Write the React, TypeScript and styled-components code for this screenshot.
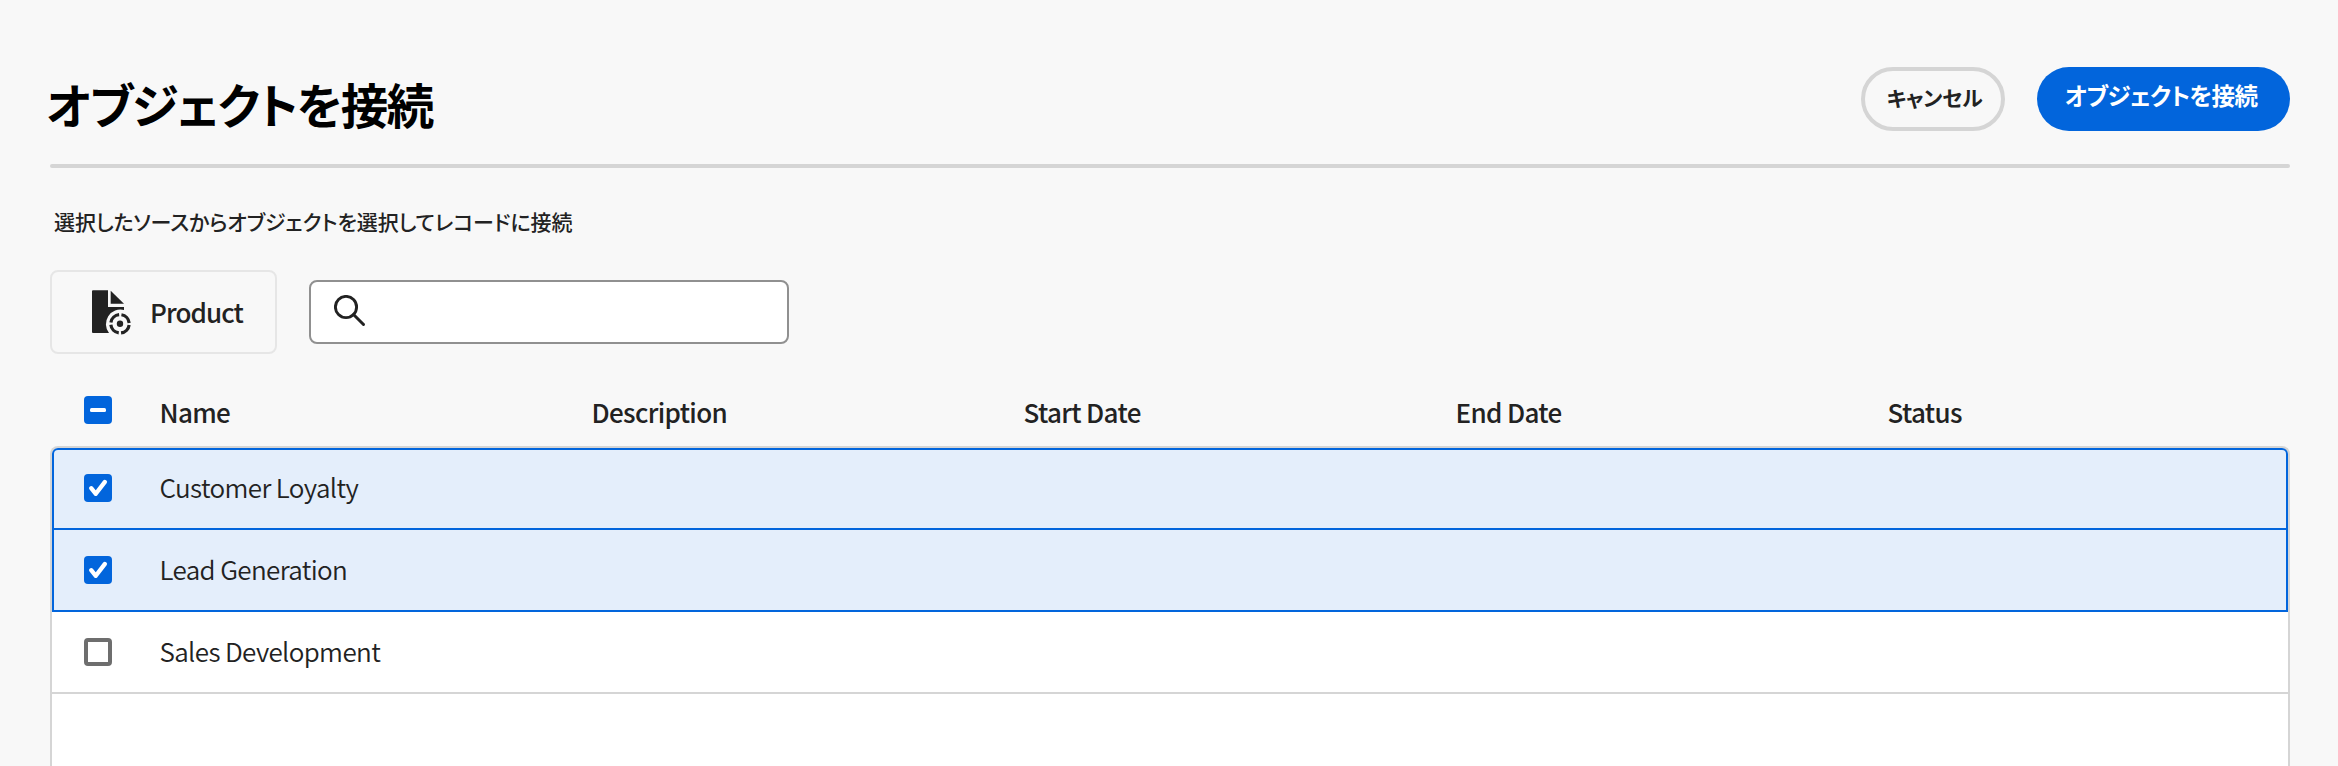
import React from "react";
import styled, { createGlobalStyle } from "styled-components";

const GlobalStyle = createGlobalStyle`
  * { box-sizing: border-box; }
  html, body { margin: 0; height: 100%; background: #f8f8f8; overflow: hidden; }
  body {
    font-family: "Noto Sans CJK JP", "Noto Sans", sans-serif;
    color: #222222;
  }
  #root { height: 100%; }
`;

const Page = styled.main`
  height: 766px;
  padding: 67px 48px 0 50px;
  display: flex;
  flex-direction: column;
  overflow: hidden;
`;

const Header = styled.header`
  display: flex;
  justify-content: space-between;
  height: 101px;
`;

const Title = styled.h1`
  margin: 4px 0 0 -4px;
  font-size: 47.5px;
  line-height: 66px;
  font-weight: 700;
  letter-spacing: -1.5px;
  font-feature-settings: "palt";
  color: #000000;
  white-space: nowrap;
`;

const Actions = styled.div`
  display: flex;
  gap: 32px;
`;

const Button = styled.button<{ $primary?: boolean }>`
  width: ${(p) => (p.$primary ? "253px" : "144px")};
  height: 64px;
  border-radius: 32px;
  border: ${(p) => (p.$primary ? "0" : "4px solid #d5d5d5")};
  background: ${(p) => (p.$primary ? "#0265dc" : "transparent")};
  color: ${(p) => (p.$primary ? "#ffffff" : "#222222")};
  padding: ${(p) => (p.$primary ? "0 5px 8px 0" : "0 0 4px 3px")};
  font-family: inherit;
  font-size: ${(p) => (p.$primary ? "23.5px" : "21px")};
  line-height: 32px;
  font-weight: 700;
  letter-spacing: ${(p) => (p.$primary ? "-0.6px" : "-0.2px")};
  font-feature-settings: "palt";
  white-space: nowrap;
`;

const Divider = styled.hr`
  width: 100%;
  margin: -4px 0 0;
  border: 0;
  height: 4px;
  flex: none;
  border-radius: 2px;
  background: #d5d5d5;
`;

const Hint = styled.p`
  margin: 37px 0 0 4px;
  height: 33px;
  font-size: 21px;
  line-height: 32px;
  font-weight: 500;
  letter-spacing: -0.08px;
  font-feature-settings: "palt";
  white-space: nowrap;
`;

const Toolbar = styled.div`
  display: flex;
  align-items: center;
  gap: 32px;
  height: 84px;
  margin-top: 32px;
`;

const SourceCard = styled.div`
  display: flex;
  align-items: center;
  width: 227px;
  height: 84px;
  padding-left: 40px;
  border: 2px solid #e6e6e6;
  border-radius: 8px;

  svg { margin-top: 2px; }
`;

const SourceName = styled.span`
  margin: -1px 0 0 18px;
  font-size: 26px;
  line-height: 36px;
  font-weight: 500;
  letter-spacing: -0.9px;
`;

const SearchBox = styled.label`
  display: flex;
  width: 480px;
  height: 64px;
  padding: 13px 16px 0 23px;
  border: 2px solid #909090;
  border-radius: 8px;
  background: #ffffff;
`;

const SearchInput = styled.input`
  flex: 1;
  height: 34px;
  border: 0;
  outline: 0;
  background: transparent;
  font: inherit;
  font-size: 26px;
`;

const HeadRow = styled.div`
  display: grid;
  grid-template-columns: 76px 432px 432px 432px 432px 1fr;
  height: 92px;
  padding: 42px 0 0 34px;
`;

const HeadCell = styled.div`
  font-size: 26px;
  line-height: 36px;
  margin: -2px 0 0 -0.5px;
  font-weight: 500;
  letter-spacing: -0.65px;
`;

const TableBody = styled.div`
  flex: 1;
  border: 2px solid #d5d5d5;
  border-bottom: 0;
  border-radius: 8px 8px 0 0;
  background: #ffffff;
`;

const Row = styled.div<{ $selected?: boolean; $first?: boolean }>`
  display: grid;
  grid-template-columns: 76px 1fr;
  height: 82px;
  padding: ${(p) => (p.$first ? "24px" : "26px")} 0 0 ${(p) => (p.$selected ? "30px" : "32px")};
  border-style: solid;
  border-color: ${(p) => (p.$selected ? "#0265dc" : "#d5d5d5")};
  border-width: ${(p) => (p.$first ? "2px" : "0")} ${(p) => (p.$selected ? "2px" : "0")} 2px;
  border-radius: ${(p) => (p.$first ? "6px 6px 0 0" : "0")};
  background: ${(p) => (p.$selected ? "#e4eefb" : "#ffffff")};
`;

const Cell = styled.div`
  font-size: 26px;
  line-height: 36px;
  margin: -5px 0 0 -0.5px;
  font-weight: 350;
  letter-spacing: -0.63px;
`;

const Box = styled.span<{ $on: boolean }>`
  display: flex;
  width: 28px;
  height: 28px;
  border-radius: 4px;
  border: ${(p) => (p.$on ? "0" : "4px solid #6e6e6e")};
  background: ${(p) => (p.$on ? "#0265dc" : "#ffffff")};
`;

type CheckState = "mixed" | "on" | "off";

function Checkbox({ state }: { state: CheckState }) {
  return (
    <Box $on={state !== "off"} role="checkbox" aria-checked={state === "mixed" ? "mixed" : state === "on"}>
      {state === "mixed" && (
        <svg width="28" height="28" viewBox="0 0 28 28">
          <rect x="6" y="12" width="16" height="4" rx="1.5" fill="#fff" />
        </svg>
      )}
      {state === "on" && (
        <svg width="28" height="28" viewBox="0 0 28 28">
          <path d="M7.200 14.200L11.800 19.800L20.900 7.900" fill="none" stroke="#fff" strokeWidth="4.300" strokeLinecap="round" strokeLinejoin="round" />
        </svg>
      )}
    </Box>
  );
}

function FileTargetIcon() {
  return (
    <svg width="40" height="46" viewBox="0 0 40 46">
      <path d="M1 .3H16V17H32V20A14.500 14.500 0 0 0 17 43H1A1 1 0 0 1 0 42V1.300A1 1 0 0 1 1 .3Z" fill="#222" />
      <path d="M18.700 .8V13.700H32Z" fill="#222" />
      <circle cx="28" cy="33.800" r="9.200" fill="none" stroke="#222" strokeWidth="3.200" strokeDasharray="12.051 2.400" strokeDashoffset="-1.200" />
      <circle cx="28" cy="33.800" r="3.200" fill="#222" />
    </svg>
  );
}

function SearchIcon() {
  return (
    <svg width="32" height="32" viewBox="0 0 32 32">
      <circle cx="12" cy="12" r="10.600" fill="none" stroke="#222" strokeWidth="2.900" />
      <path d="M19.500 19.500L29.500 29.500" stroke="#222" strokeWidth="3" strokeLinecap="round" />
    </svg>
  );
}

const headings = ["Name", "Description", "Start Date", "End Date", "Status"];
const records = [
  { name: "Customer Loyalty", selected: true },
  { name: "Lead Generation", selected: true },
  { name: "Sales Development", selected: false },
];

export default function App() {
  return (
    <>
      <GlobalStyle />
      <Page>
        <Header>
          <Title>オブジェクトを接続</Title>
          <Actions>
            <Button>キャンセル</Button>
            <Button $primary>オブジェクトを接続</Button>
          </Actions>
        </Header>
        <Divider />
        <Hint>選択したソースからオブジェクトを選択してレコードに接続</Hint>
        <Toolbar>
          <SourceCard>
            <FileTargetIcon />
            <SourceName>Product</SourceName>
          </SourceCard>
          <SearchBox>
            <SearchIcon />
            <SearchInput aria-label="Search" />
          </SearchBox>
        </Toolbar>
        <HeadRow>
          <Checkbox state="mixed" />
          {headings.map((h) => (
            <HeadCell key={h}>{h}</HeadCell>
          ))}
        </HeadRow>
        <TableBody>
          {records.map((r, i) => (
            <Row key={r.name} $selected={r.selected} $first={i === 0}>
              <Checkbox state={r.selected ? "on" : "off"} />
              <Cell>{r.name}</Cell>
            </Row>
          ))}
        </TableBody>
      </Page>
    </>
  );
}
